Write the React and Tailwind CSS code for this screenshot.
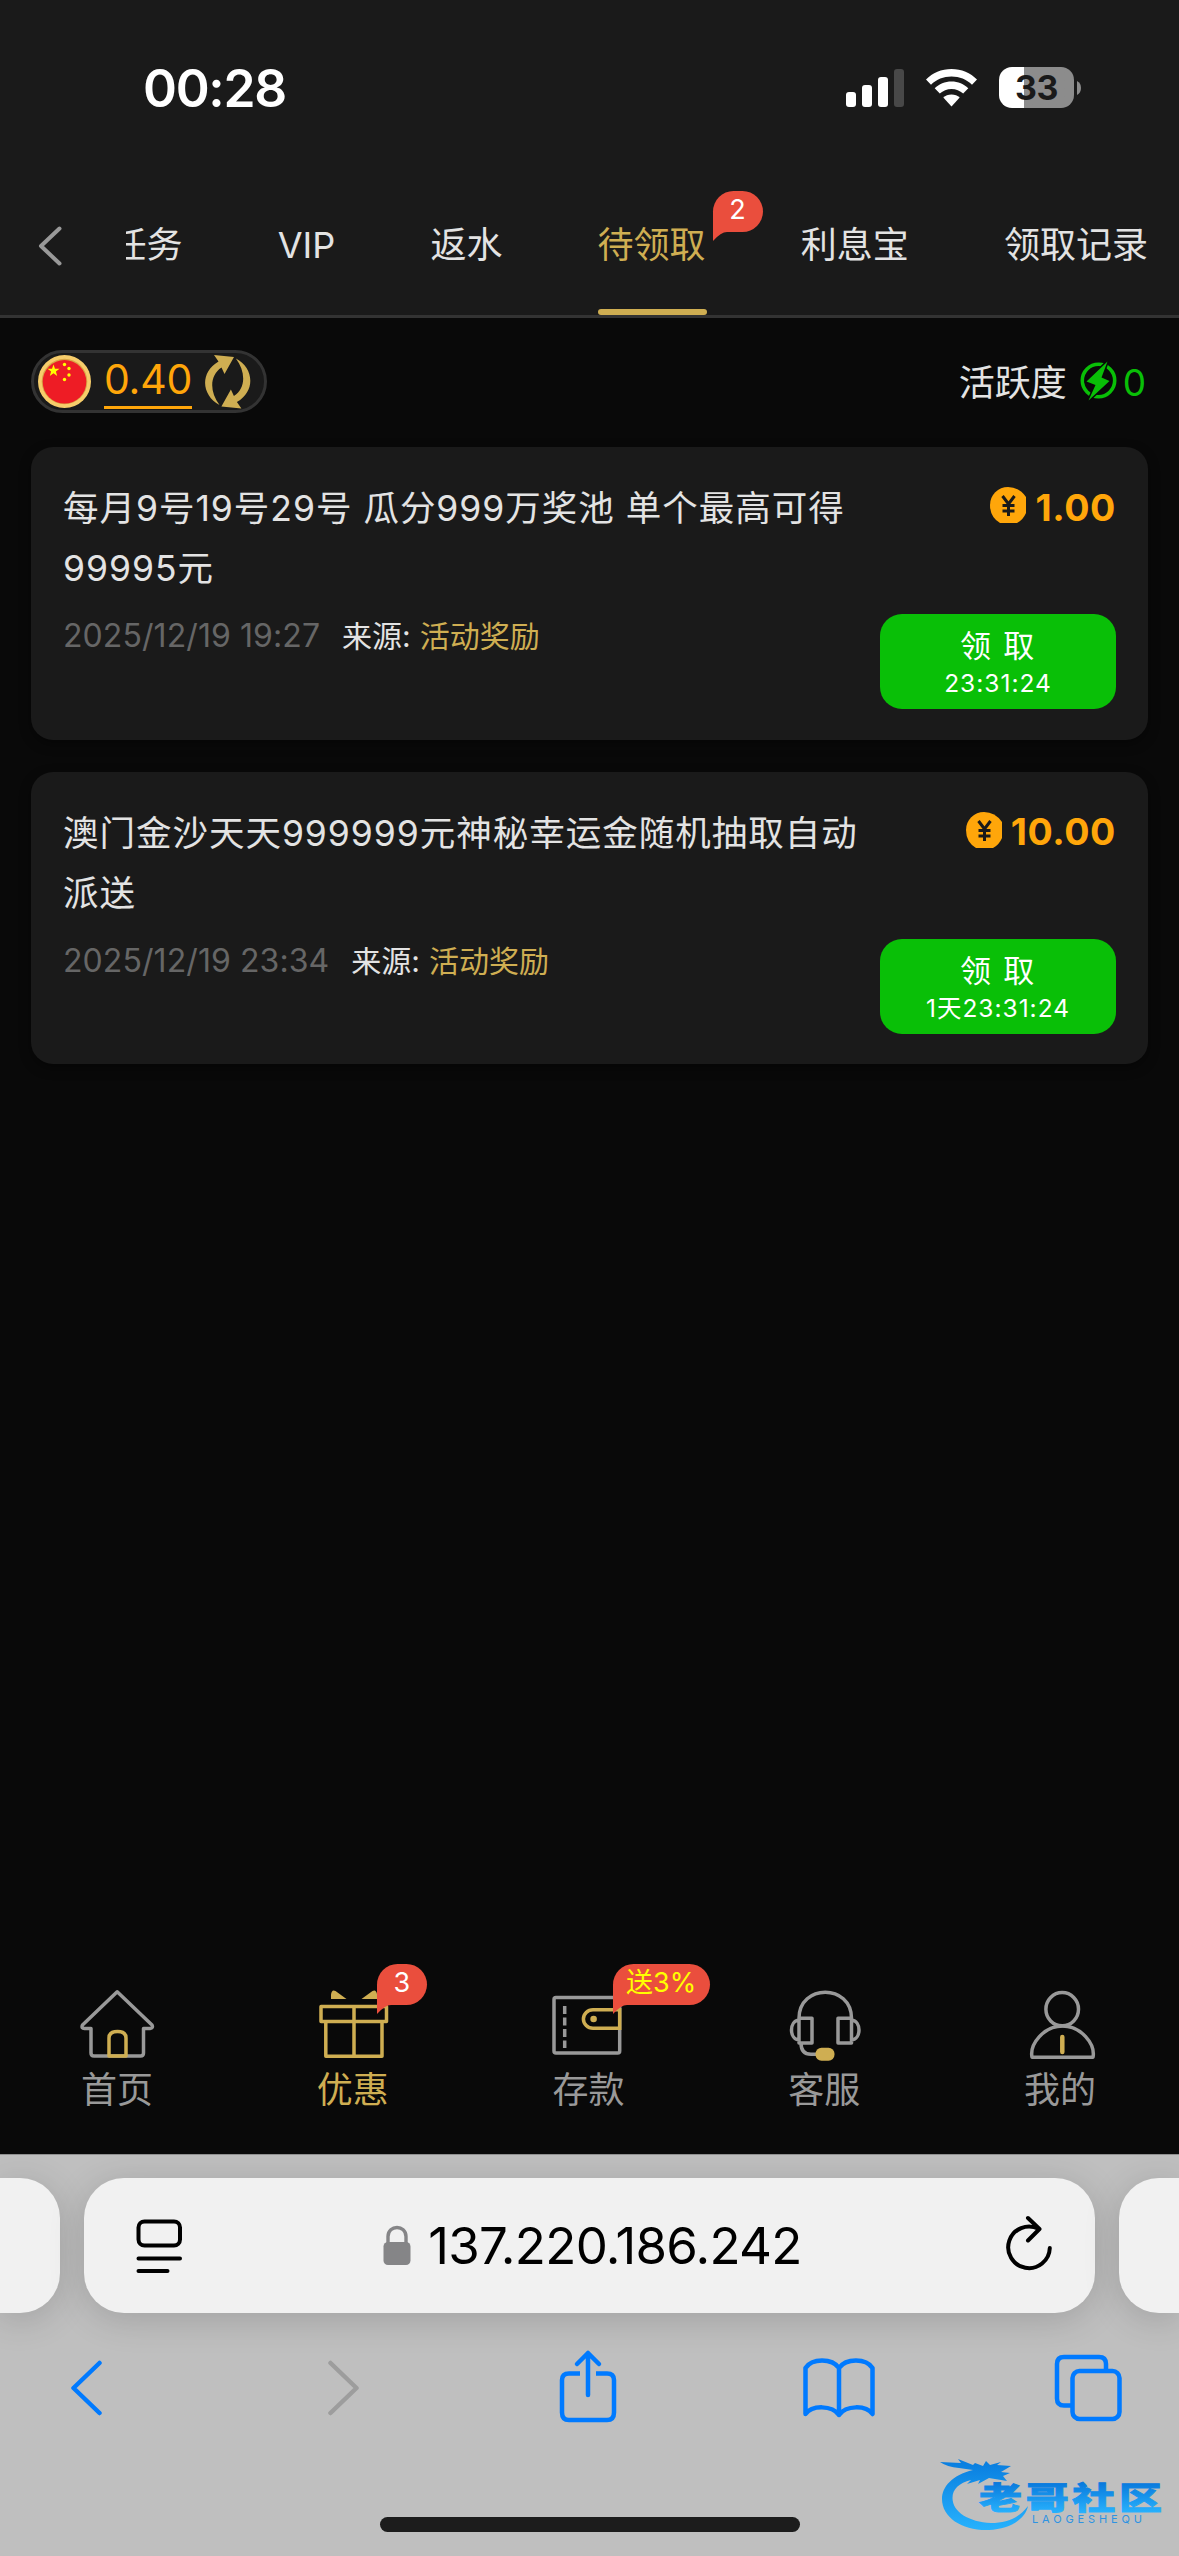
import clsx from 'clsx';

const tabs = [
  { label: '任务' },
  { label: 'VIP' },
  { label: '返水' },
  { label: '待领取', active: true, badge: '2' },
  { label: '利息宝' },
  { label: '领取记录' },
];

const rewards = [
  {
    title: '每月9号19号29号 瓜分999万奖池 单个最高可得99995元',
    date: '2025/12/19 19:27',
    amount: '1.00',
    countdown: '23:31:24',
  },
  {
    title: '澳门金沙天天999999元神秘幸运金随机抽取自动派送',
    date: '2025/12/19 23:34',
    amount: '10.00',
    countdown: '1天23:31:24',
  },
];

const Badge = ({ children, className }) => (
  <span className={clsx('absolute flex h-[41px] items-center justify-center rounded-[21px] rounded-bl-none bg-[#ea4e3d] text-[27px] leading-none', className)}>
    <span className="-mt-1">{children}</span>
    <svg className="absolute left-0 top-[38px]" width="14" height="12" viewBox="0 0 14 12">
      <path d="M0 0h14v3Q8 3 0 12z" fill="#ea4e3d" />
    </svg>
  </span>
);

const StatusBar = () => (
  <div className="flex h-[171px] items-start justify-between pl-[143px] pr-[98px] pt-[67px]">
    <span className="-mt-px text-[51.500px] font-semibold leading-[44px] tracking-[-1.300px] text-white">00:28</span>
    <div className="flex items-center">
      <svg width="58" height="38" viewBox="0 0 58 38" fill="#fff">
        <rect x="0" y="23" width="10" height="15" rx="3" />
        <rect x="16" y="16" width="10" height="22" rx="3" />
        <rect x="32" y="8" width="10" height="30" rx="3" />
        <rect x="48" y="0" width="10" height="38" rx="3" fill="#484848" />
      </svg>
      <svg className="ml-[22px]" width="51" height="38" viewBox="0 0 51 38" fill="#fff">
        <path d="M25.500 0C35.500 0 44.500 4 51 10.500L46 15.800C40.500 10.500 33.500 7.600 25.500 7.600S10.500 10.500 5 15.800L0 10.500C6.500 4 15.500 0 25.500 0Z" />
        <path d="M25.500 12.500C32 12.500 38 15 42.300 19.300L37.200 24.600C34 21.700 30 20 25.500 20S17 21.700 13.800 24.600L8.700 19.300C13 15 19 12.500 25.500 12.500Z" />
        <path d="M25.500 25.500C28.800 25.500 31.600 26.700 33.700 28.500L25.500 37.500L17.300 28.500C19.400 26.700 22.200 25.500 25.500 25.500Z" />
      </svg>
      <div className="ml-[22px] flex h-[41px] w-[75px] items-center justify-center rounded-[13px] bg-linear-to-r from-white from-33% to-[#8c8c8c] to-33% text-[34px] font-bold leading-none tracking-[-0.500px] text-[#1a1a1a]">
        33
      </div>
      <svg className="ml-[3px]" width="4" height="14" viewBox="0 0 4 14">
        <path d="M0 0Q4 2 4 7T0 14z" fill="#8c8c8c" />
      </svg>
    </div>
  </div>
);

const TabBar = () => (
  <div className="flex h-[147px] border-b-[3px] border-[#333]">
    <div className="flex w-[126px] shrink-0 items-center pl-[38px]">
      <svg width="24" height="40" viewBox="0 0 24 40" className="mt-[6px]" fill="none" stroke="#999" strokeWidth="4" strokeLinecap="round" strokeLinejoin="round">
        <path d="M21.500 2.500L3 20l18.500 17.500" />
      </svg>
    </div>
    <div className="flex flex-1 gap-[95.200px] overflow-hidden text-[36px] text-[#e3e3e3]">
      {tabs.map((tab, i) => (
        <div key={tab.label} className={clsx('relative shrink-0 whitespace-nowrap leading-[148px]', i === 0 && '-ml-[15.500px]', tab.active && 'text-[#cfae52]')}>
          {tab.label}
          {tab.badge && <Badge className="left-[115px] top-[20px] w-[50px] text-white">{tab.badge}</Badge>}
          {tab.active && <span className="absolute left-0 top-[138px] h-[6px] w-[109px] rounded-[3px] bg-[#cfae52]" />}
        </div>
      ))}
    </div>
  </div>
);

const FlagIcon = () => (
  <svg width="53" height="53" viewBox="0 0 53 53">
    <circle cx="26.500" cy="26.500" r="26.500" fill="#f7cd6b" />
    <circle cx="26.500" cy="26.500" r="22.800" fill="#d9a544" />
    <circle cx="26.500" cy="26.800" r="21.800" fill="#ee1c25" />
    <path d="M15.500 9.500l1.500 4.300h4.500l-3.600 2.700 1.300 4.400-3.700-2.600-3.700 2.600 1.300-4.400-3.600-2.700h4.500z" fill="#ff0" />
    <g fill="#ff0">
      <circle cx="26.500" cy="9.500" r="1.700" />
      <circle cx="31" cy="13.500" r="1.700" />
      <circle cx="31" cy="20" r="1.700" />
      <circle cx="26.500" cy="24.500" r="1.700" />
    </g>
  </svg>
);

const RefreshIcon = () => (
  <svg width="46" height="54" viewBox="0 0 46 54" fill="#cfae52">
    <path d="M9 0L29 2L19.500 19L16.500 12.500C5 20 4 36 14.500 50C-3 41-6 18 13.500 6.500Z" />
    <path d="M9 0L29 2L19.500 19L16.500 12.500C5 20 4 36 14.500 50C-3 41-6 18 13.500 6.500Z" transform="rotate(180 22.700 26.800)" />
  </svg>
);

const BoltIcon = () => (
  <svg width="38" height="40" viewBox="0 0 38 40">
    <circle cx="18.500" cy="19.500" r="16.200" fill="none" stroke="#09bf07" strokeWidth="3.600" />
    <path d="M27.500 0.500L6.500 20.500L15.500 24L8.500 39.500L29.500 20L21.500 16.500Z" fill="#09bf07" stroke="#090909" strokeWidth="3" paintOrder="stroke" />
  </svg>
);

const CoinIcon = () => (
  <svg width="36" height="36" viewBox="0 0 36 36">
    <path d="M10 36Q0 30 0 18A18 18 0 0 1 18 0Q29 0 36 10V26Q33 33 27 36Z" fill="#ffa60a" />
    <path d="M12.500 9l6 8 6-8M18.500 17v12M12.500 18.500h12M12.500 24h12" fill="none" stroke="#1a1a1a" strokeWidth="3" />
  </svg>
);

const BalanceRow = () => (
  <div className="flex h-[63px] items-center justify-between">
    <div className="flex h-[63px] w-[236px] items-center rounded-full border-[3px] border-[#333] bg-[#1a1a1a] pl-[4px]">
      <FlagIcon />
      <span className="ml-[13px] mt-[1px] h-[54px] w-[88px] border-b-[3px] border-[#ffa60a] text-[41px] leading-[49px] tracking-[-0.200px] text-[#ffa60a]">0.40</span>
      <span className="ml-[13px]">
        <RefreshIcon />
      </span>
    </div>
    <div className="mt-[2px] flex items-center pr-[2px] text-[36px] text-[#e3e3e3]">
      活跃度
      <span className="-mt-[3px] ml-[13px]">
        <BoltIcon />
      </span>
      <span className="ml-[5px] text-[37px] text-[#09bf07]">0</span>
    </div>
  </div>
);

const RewardCard = ({ reward }) => (
  <div className="flex h-[292.500px] justify-between rounded-[22px] bg-[#1a1a1a] pl-[32px] pr-[32px] pt-[32px] shadow-[0_4px_12px_rgba(0,0,0,0.4)]">
    <div className="w-[800px]">
      <p className="text-[35.500px] leading-[60px] tracking-[0.980px] text-[#e3e3e3]">{reward.title}</p>
      <div className="mt-[17px] flex items-center text-[30px] leading-[40px]">
        <span className="mr-[22px] text-[32px] tracking-[0.080px] text-[#666]">{reward.date}</span>
        <span className="mr-[9px] text-[#e3e3e3]">来源:</span>
        <span className="text-[#cfae52]">活动奖励</span>
      </div>
    </div>
    <div className="flex flex-col items-end">
      <div className="flex h-[58px] items-center text-[37.500px] font-bold tracking-[0.600px] text-[#ffa60a]">
        <span className="-mt-[6px] mr-[9px]">
          <CoinIcon />
        </span>
        {reward.amount}
      </div>
      <button className="mt-[77px] flex h-[95px] w-[236px] flex-col items-center rounded-[22px] bg-[#09bf07] pt-[11px] text-white">
        <span className="text-[31px] leading-[42px] tracking-[1.800px]">领 取</span>
        <span className="text-[24.500px] leading-[32px] tracking-[1px]">{reward.countdown}</span>
      </button>
    </div>
  </div>
);

const HomeIcon = () => (
  <svg width="76" height="74" viewBox="0 0 76 74" fill="none" stroke="#999" strokeWidth="3.500" strokeLinejoin="round">
    <path d="M37.200 2.800L2.500 36Q1 39.500 4.500 39.500H11V64Q11 67 14 67H60.500Q63.500 67 63.500 64V39.500H70Q73.500 39 72 36Z" />
    <path d="M29 67V49Q29 42.500 37.500 42.500T46 49V67Z" stroke="#cfae52" />
  </svg>
);

const GiftIcon = () => (
  <svg width="76" height="74" viewBox="0 0 76 74" fill="none" stroke="#cfae52" strokeWidth="3.500" strokeLinejoin="round">
    <path d="M5 17.500H70.500V32.500H5ZM9.800 32.500H66V67.300H9.800ZM38 17.500V67.300" />
    <path d="M15 10V6Q15.500 0 19.500 2L30.500 10ZM61 10V5Q60 0 56.500 2L45.500 10Z" fill="#cfae52" stroke="none" />
  </svg>
);

const WalletIcon = () => (
  <svg width="76" height="74" viewBox="0 0 76 74" fill="none" stroke="#999" strokeWidth="3.500">
    <rect x="3" y="8.500" width="65.700" height="55.500" rx="2" />
    <path d="M13.700 17v42" strokeDasharray="8 3.500" />
    <path d="M68.700 20.700H42A9.600 9.300 0 0 0 42 39.300H68.700Z" stroke="#cfae52" />
    <circle cx="42.600" cy="30" r="3.300" fill="#cfae52" stroke="none" />
  </svg>
);

const ServiceIcon = () => (
  <svg width="76" height="74" viewBox="0 0 76 74" fill="none" stroke="#999" strokeWidth="3.500" strokeLinejoin="round">
    <path d="M12 29.300C12 -5.500 64.500 -5.500 64.500 29.300M12 29.300h13v24.700h-13ZM51 29.300h13.500v24.700h-13.500ZM12 31C2 32 2 50 12 51M64.500 31C74.500 32 74.500 50 64.500 51M14 54Q14 65.300 24 65.300H30" />
    <rect x="28.500" y="58.700" width="19" height="13" rx="6" fill="#cfae52" stroke="none" />
  </svg>
);

const UserIcon = () => (
  <svg width="76" height="74" viewBox="0 0 76 74" fill="none" stroke="#999" strokeWidth="3.500" strokeLinejoin="round">
    <ellipse cx="39.200" cy="20.200" rx="16.300" ry="16.600" />
    <path d="M9 68.300C6.500 55 21 37 39.500 37S72.500 55 70 68.300Z" />
    <path d="M39.300 48v15" stroke="#cfae52" strokeWidth="4.500" strokeLinecap="round" />
  </svg>
);

const navItems = [
  { label: '首页', icon: <HomeIcon /> },
  { label: '优惠', icon: <GiftIcon />, active: true, badge: '3', badgeClass: 'left-[141px] top-0 w-[50px] text-white' },
  { label: '存款', icon: <WalletIcon />, badge: '送3%', badgeClass: 'left-[141px] top-0 w-[97px] text-[#ff0]' },
  { label: '客服', icon: <ServiceIcon /> },
  { label: '我的', icon: <UserIcon /> },
];

const BottomNav = () => (
  <nav className="flex h-[190px]">
    {navItems.map((item) => (
      <div key={item.label} className={clsx('relative flex flex-1 flex-col items-center pt-[25px] text-[36px]', item.active ? 'text-[#cfae52]' : 'text-[#999]')}>
        <div className="h-[74px]">{item.icon}</div>
        <span className="mr-[2px] leading-[55px]">{item.label}</span>
        {item.badge && <Badge className={item.badgeClass}>{item.badge}</Badge>}
      </div>
    ))}
  </nav>
);

const AddressBar = () => (
  <div className="flex h-[135px] gap-[24px]">
    <div className="w-[60px] rounded-r-[40px] bg-[#f1f1f1] shadow-[0_6px_36px_rgba(0,0,0,0.16)]" />
    <div className="flex flex-1 items-center justify-between rounded-[40px] bg-[#f1f1f1] pl-[52px] pr-[42px] shadow-[0_6px_36px_rgba(0,0,0,0.16)]">
      <svg width="46" height="56" viewBox="0 0 46 56" fill="none" stroke="#000" strokeWidth="4" strokeLinecap="round">
        <rect x="2.500" y="3.500" width="41.500" height="24" rx="6" />
        <path d="M2.500 40.500h41.500M2.500 53h29" />
      </svg>
      <div className="flex items-center gap-[17px]">
        <svg width="28" height="40" viewBox="0 0 28 40" className="-mt-[2px]">
          <rect x="0.500" y="17" width="27" height="23" rx="4.500" fill="#858587" />
          <path d="M5 20V11.500C5 -0.500 23 -0.500 23 11.500V20" fill="none" stroke="#858587" strokeWidth="3.400" />
        </svg>
        <span className="mr-[2px] text-[51px] leading-[60px] tracking-[-0.700px] text-black">137.220.186.242</span>
      </div>
      <svg width="48" height="56" viewBox="0 0 48 56" className="-mt-[5px]" fill="none" stroke="#000" strokeWidth="4" strokeLinecap="round" strokeLinejoin="round">
        <path d="M33.500 13.800A20.800 20.800 0 1 0 44.800 33M23 3L34.500 14L23 25.500" />
      </svg>
    </div>
    <div className="w-[60px] rounded-l-[40px] bg-[#f1f1f1] shadow-[0_6px_36px_rgba(0,0,0,0.16)]" />
  </div>
);

const Toolbar = () => (
  <div className="mt-[37px] flex h-[76px] items-center justify-between pl-[70px] pr-[57px]">
    <svg width="32" height="56" viewBox="0 0 32 56" fill="none" stroke="#007aff" strokeWidth="4.500" strokeLinecap="round" strokeLinejoin="round">
      <path d="M29.500 3L3.500 28L29.500 53" />
    </svg>
    <svg width="32" height="56" viewBox="0 0 32 56" className="ml-[71px]" fill="none" stroke="#9d9d9d" strokeWidth="4.500" strokeLinecap="round" strokeLinejoin="round">
      <path d="M2.500 3L28.500 28L2.500 53" />
    </svg>
    <svg width="58" height="74" viewBox="0 0 58 74" className="-mt-[4px] ml-[43px]" fill="none" stroke="#007aff" strokeWidth="4.500" strokeLinecap="round" strokeLinejoin="round">
      <path d="M29 46V4M18 15L29 4L40 15" />
      <path d="M21 24.500H10Q3 24.500 3 31V63.500Q3 71 10 71H48Q55 71 55 63.500V31Q55 24.500 48 24.500H37" strokeLinecap="butt" />
    </svg>
    <svg width="72" height="62" viewBox="0 0 72 62" className="ml-[31px]" fill="none" stroke="#007aff" strokeWidth="4.500" strokeLinecap="round" strokeLinejoin="round">
      <path d="M36 11C29 1 9 1 2.500 11V57C9 48 29 48 36 58C43 48 63 48 69.500 57V11C63 1 43 1 36 11ZM36 11V58" />
    </svg>
    <svg width="68" height="68" viewBox="0 0 68 68" className="ml-[24px]" fill="none" stroke="#007aff" strokeWidth="4.500">
      <path d="M17 51.500H10Q3 51.500 3 44.500V10Q3 3 10 3H45Q52 3 52 10V17" />
      <rect x="18.500" y="17" width="47" height="48" rx="7" />
    </svg>
  </div>
);

const Watermark = () => (
  <svg className="absolute bottom-[22px] left-[937px]" width="228" height="76" viewBox="0 0 228 76">
    <defs>
      <linearGradient id="ring" x1="0" y1="5" x2="0" y2="72" gradientUnits="userSpaceOnUse">
        <stop offset="0" stopColor="#0a7fe0" />
        <stop offset="1" stopColor="#27b2fd" />
      </linearGradient>
      <linearGradient id="word" x1="0" y1="-38" x2="0" y2="4" gradientUnits="userSpaceOnUse">
        <stop offset="0" stopColor="#0878dc" />
        <stop offset="1" stopColor="#27b0fc" />
      </linearGradient>
    </defs>
    <path d="M36 12C15 17 5 29 5 41C5 60 26 73 52 72C72 71 88 62 91 48C82 60 70 65 54 65C32 64 15.500 54 15.500 40C15.500 31 22 25 34 22L30 26L43 22L41 26L52 20L70 23L66 18L73 15L64 14L74 8L60 7L64 4L53 7L49 3L46 8L38 5L36 7L26 3L21 1L24 5L3 4Q10 9 22 10Z" fill="url(#ring)" />
    <text transform="translate(42 51) scale(1 .71)" fontSize="43" fontWeight="900" letterSpacing="3.700" fill="url(#word)" stroke="url(#word)" strokeWidth="1.200">老哥社区</text>
    <text x="95" y="65" fontSize="11" textLength="110" fill="#2e93e2">LAOGESHEQU</text>
  </svg>
);

const App = () => {
  return (
    <div className="relative flex h-[2556px] w-[1179px] flex-col overflow-hidden bg-[#090909] font-['Inter','Noto_Sans_CJK_SC',sans-serif]">
      <header className="bg-[#1a1a1a]">
        <StatusBar />
        <TabBar />
      </header>
      <main className="flex flex-1 flex-col px-[31px] pt-[32px]">
        <BalanceRow />
        <div className="mt-[34px] flex flex-col gap-[32px]">
          {rewards.map((reward) => (
            <RewardCard key={reward.date} reward={reward} />
          ))}
        </div>
      </main>
      <BottomNav />
      <footer className="flex h-[402px] flex-col overflow-hidden border-t border-[#8f8f8f] bg-[#bfbfbf] pt-[23px]">
        <AddressBar />
        <Toolbar />
        <div className="mx-auto mt-[91px] h-[15px] w-[420px] rounded-full bg-[#1c1c1c]" />
      </footer>
      <Watermark />
    </div>
  );
};

export default App;
